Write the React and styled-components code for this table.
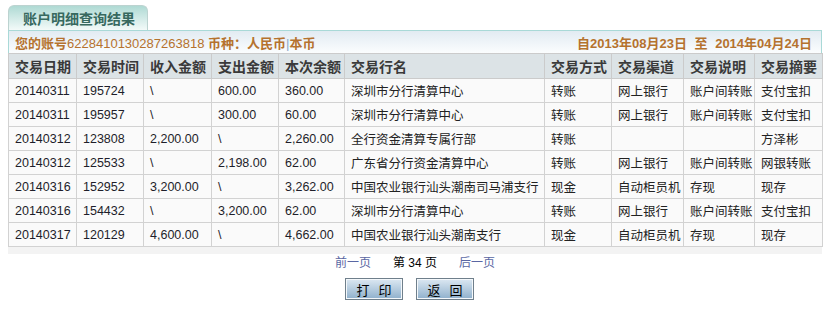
import React from "react";
import styled, { createGlobalStyle } from "styled-components";

const Global = createGlobalStyle`
  html, body { margin: 0; padding: 0; background: #fff; }
  body { font-family: "Liberation Sans", "Noto Sans CJK SC", sans-serif; }
`;

const Page = styled.div`
  padding: 5px 14px 0 8px;
  width: 814px;
`;

const Tab = styled.div`
  width: 140px;
  height: 25px;
  box-sizing: border-box;
  border: 1px solid #bcd3d0;
  border-bottom: none;
  border-radius: 6px 6px 0 0;
  background: linear-gradient(#afdad4, #f3faf9);
  display: flex;
  align-items: center;
  padding-left: 14px;
  font-size: 14px;
  font-weight: bold;
  color: #37695f;
  font-family: "Noto Sans CJK SC", sans-serif;
`;

const Panel = styled.div`
  background: #f3f3f3;
  padding-bottom: 7px;
`;

const InfoBar = styled.div`
  height: 23px;
  box-sizing: border-box;
  border: 1px solid #a9d9d7;
  border-bottom: none;
  background: linear-gradient(#e2ebf2, #fbfdfe);
  display: flex;
  align-items: center;
  justify-content: space-between;
  padding: 0 9px 0 6px;
  color: #b5722e;
  font-size: 13px;
`;

const Strong = styled.b`
  font-family: "Noto Sans CJK SC", sans-serif;
  font-weight: bold;
`;

const Sep = styled.span`
  color: #8da6c8;
  font-weight: normal;
`;

const Dates = styled.span`
  font-weight: bold;
  font-family: "Liberation Sans", "Noto Sans CJK SC", sans-serif;
  word-spacing: 4px;
`;

const Table = styled.table`
  width: 814px;
  border-collapse: collapse;
  table-layout: fixed;
  background: #fafafa;
`;

const Th = styled.th`
  height: 24px;
  padding: 0 0 0 6px;
  text-align: left;
  background: #dce3e6;
  border: 1px solid #cbcbcb;
  color: #3a3a3a;
  font-size: 14px;
  font-weight: bold;
  font-family: "Noto Sans CJK SC", sans-serif;
  white-space: nowrap;
  overflow: hidden;
`;

const Td = styled.td`
  height: 23px;
  padding: 0 0 0 6px;
  border: 1px solid #d2d2d2;
  color: ${(p) => (p.$num ? "#1e1e2a" : "#222")};
  font-size: 12.5px;
  white-space: nowrap;
  overflow: hidden;
`;

const Pager = styled.div`
  display: flex;
  justify-content: center;
  gap: 22px;
  margin-top: 0;
  height: 18px;
  line-height: 18px;
  font-size: 12px;
`;

const PageLink = styled.a`
  color: #5a67a3;
  text-decoration: none;
`;

const PageNo = styled.span`
  color: #000;
`;

const Buttons = styled.div`
  display: flex;
  justify-content: center;
  gap: 13px;
  margin-top: 6px;
  padding-right: 11px;
`;

const Button = styled.button`
  width: 58px;
  height: 22px;
  box-sizing: border-box;
  border: 1px solid #6f7f8b;
  box-shadow: inset 0 0 0 1px #f4f8fb;
  background: linear-gradient(#dce8f2, #8fb0cc);
  font-family: "Noto Sans CJK SC", sans-serif;
  font-size: 13px;
  color: #000;
  letter-spacing: 3px;
  padding: 0 0 0 3px;
  cursor: pointer;
`;

const widths = [68, 67, 68, 67, 66, 200, 67, 72, 71, 68];
const headers = ["交易日期", "交易时间", "收入金额", "支出金额", "本次余额", "交易行名", "交易方式", "交易渠道", "交易说明", "交易摘要"];
const rows = [
  ["20140311", "195724", "\\", "600.00", "360.00", "深圳市分行清算中心", "转账", "网上银行", "账户间转账", "支付宝扣"],
  ["20140311", "195957", "\\", "300.00", "60.00", "深圳市分行清算中心", "转账", "网上银行", "账户间转账", "支付宝扣"],
  ["20140312", "123808", "2,200.00", "\\", "2,260.00", "全行资金清算专属行部", "转账", "", "", "方泽彬"],
  ["20140312", "125533", "\\", "2,198.00", "62.00", "广东省分行资金清算中心", "转账", "网上银行", "账户间转账", "网银转账"],
  ["20140316", "152952", "3,200.00", "\\", "3,262.00", "中国农业银行汕头潮南司马浦支行", "现金", "自动柜员机", "存现", "现存"],
  ["20140316", "154432", "\\", "3,200.00", "62.00", "深圳市分行清算中心", "转账", "网上银行", "账户间转账", "支付宝扣"],
  ["20140317", "120129", "4,600.00", "\\", "4,662.00", "中国农业银行汕头潮南支行", "现金", "自动柜员机", "存现", "现存"],
];

export default function App() {
  return (
    <>
      <Global />
      <Page>
        <Tab>账户明细查询结果</Tab>
        <Panel>
          <InfoBar>
            <span>
              <Strong>您的账号</Strong>6228410130287263818 <Strong>币种：人民币</Strong>
              <Sep>|</Sep>
              <Strong>本币</Strong>
            </span>
            <Dates>自2013年08月23日 至 2014年04月24日</Dates>
          </InfoBar>
          <Table>
            <colgroup>
              {widths.map((w, i) => (
                <col key={i} style={{ width: w }} />
              ))}
            </colgroup>
            <thead>
              <tr>
                {headers.map((h) => (
                  <Th key={h}>{h}</Th>
                ))}
              </tr>
            </thead>
            <tbody>
              {rows.map((r, i) => (
                <tr key={i}>
                  {r.map((c, j) => (
                    <Td key={j} $num={j < 5}>{c}</Td>
                  ))}
                </tr>
              ))}
            </tbody>
          </Table>
        </Panel>
        <Pager>
          <PageLink href="#">前一页</PageLink>
          <PageNo>第 34 页</PageNo>
          <PageLink href="#">后一页</PageLink>
        </Pager>
        <Buttons>
          <Button>打 印</Button>
          <Button>返 回</Button>
        </Buttons>
      </Page>
    </>
  );
}
